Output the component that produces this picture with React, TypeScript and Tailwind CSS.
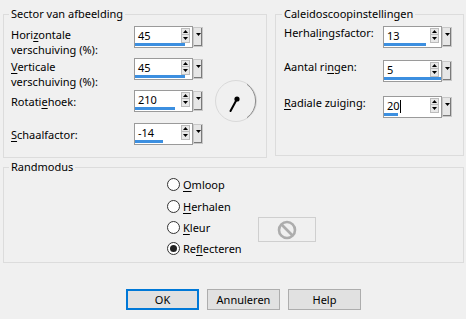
import React from "react";

function Mn({ children }: { children: React.ReactNode }) {
  return <span className="underline underline-offset-[2px]">{children}</span>;
}

function SpinArrows() {
  return (
    <div className="flex h-[15px] w-[9px] flex-col border border-[#bcbcbc] bg-[#e8e8e8]">
      <div className="flex h-[6px] items-center justify-center border-b border-[#bcbcbc]">
        <svg width="5" height="3" viewBox="0 0 5 3">
          <path d="M0 3 L2.5 0 L5 3 Z" fill="#000" />
        </svg>
      </div>
      <div className="flex h-[6px] items-center justify-center">
        <svg width="5" height="3" viewBox="0 0 5 3">
          <path d="M0 0 L5 0 L2.5 3 Z" fill="#000" />
        </svg>
      </div>
    </div>
  );
}

function SpinBox({ value, bar, caret }: { value: string; bar: number; caret?: boolean }) {
  return (
    <div className="flex items-start">
      <div className="flex h-[22px] w-[59px] flex-col border border-[#9a9a9a] bg-white">
        <div className="flex h-[16px] items-start">
          <div className="flex h-[16px] flex-1 items-center pl-[3px] pt-[2px] leading-[14px]">
            <span>{value}</span>
            {caret && <span className="inline-block h-[13px] w-px bg-black" />}
          </div>
          <div className="mr-[2px] mt-[1px]">
            <SpinArrows />
          </div>
        </div>
        <div className="h-[3px] bg-[#3c8fe0]" style={{ width: bar }} />
      </div>
      <div className="mt-[1px] flex h-[20px] w-[10px] items-start justify-center border border-[#c8c8c8] bg-[#e6e6e6] pt-[5px] shadow-[inset_-1px_-1px_0_#7a7a7a]">
        <svg width="5" height="3" viewBox="0 0 5 3">
          <path d="M0 0 L5 0 L2.5 3 Z" fill="#000" />
        </svg>
      </div>
    </div>
  );
}

function Radio({ label, checked }: { label: React.ReactNode; checked?: boolean }) {
  return (
    <div className="flex items-center gap-[3px]">
      <div className="flex h-[13px] w-[13px] items-center justify-center rounded-full border border-[#333333] bg-white">
        {checked && <div className="h-[7px] w-[7px] rounded-full bg-[#222222]" />}
      </div>
      <span>{label}</span>
    </div>
  );
}

function Dial() {
  return (
    <svg width="44" height="44" viewBox="0 0 44 44">
      <circle cx="22" cy="22" r="20.5" fill="none" stroke="#d9d9d9" strokeWidth="1" />
      <path d="M 33 5.3 A 20.5 20.5 0 0 1 33 38.7" fill="none" stroke="#8a8a8a" strokeWidth="1" />
      <line x1="23" y1="20" x2="16.5" y2="32" stroke="#000" strokeWidth="2" strokeLinecap="round" />
      <circle cx="23" cy="20" r="2.6" fill="#000" />
    </svg>
  );
}

function Button({ children, primary }: { children: React.ReactNode; primary?: boolean }) {
  return (
    <div
      className={
        primary
          ? "flex h-[21px] w-[73px] items-center justify-center border border-[#0078d7] bg-[#e1e1e1] shadow-[inset_0_0_0_1px_#0078d7]"
          : "flex h-[21px] w-[73px] items-center justify-center border border-[#adadad] bg-[#e1e1e1]"
      }
    >
      {children}
    </div>
  );
}

export default function App() {
  return (
    <div className="h-[319px] w-[466px] overflow-hidden bg-[#f0f0f0] font-['Noto_Sans',sans-serif] text-[11px] leading-[15px] text-black">
      <div className="flex items-start pl-[3px] pt-[6px]">
        <fieldset className="h-[152px] w-[264px] border border-[#dcdcdc] pl-[7px]">
          <legend className="ml-[-2px] px-[2px] leading-[16px]">Sector van afbeelding</legend>
          <div className="flex items-start">
            <div className="flex flex-col pt-[4px]">
              <div className="flex h-[32px] items-start">
                <div className="w-[123px] pt-[1px]">
                  Hori<Mn>z</Mn>ontale
                  <br />
                  verschuiving (%):
                </div>
                <SpinBox value="45" bar={50} />
              </div>
              <div className="flex h-[32px] items-start">
                <div className="w-[123px] pt-[1px]">
                  <Mn>V</Mn>erticale
                  <br />
                  verschuiving (%):
                </div>
                <SpinBox value="45" bar={50} />
              </div>
              <div className="flex h-[33px] items-start">
                <div className="flex h-[22px] w-[123px] items-center">
                  <span>
                    Rotati<Mn>e</Mn>hoek:
                  </span>
                </div>
                <SpinBox value="210" bar={40} />
              </div>
              <div className="flex h-[22px] items-start">
                <div className="flex h-[22px] w-[123px] items-center">
                  <span>
                    <Mn>S</Mn>chaalfactor:
                  </span>
                </div>
                <SpinBox value="-14" bar={28} />
              </div>
            </div>
            <div className="ml-[11px] mt-[57px]">
              <Dial />
            </div>
          </div>
        </fieldset>
        <fieldset className="ml-[8px] h-[150px] w-[189px] border border-[#dcdcdc] pl-[8px]">
          <legend className="ml-[-2px] px-[2px] leading-[16px]">Caleidoscoopinstellingen</legend>
          <div className="flex flex-col pt-[4px]">
            <div className="flex h-[34px] items-start">
              <div className="mt-[-1px] w-[99px] leading-[16px]">
                Herhal<Mn>i</Mn>ngsfactor:
              </div>
              <SpinBox value="13" bar={42} />
            </div>
            <div className="flex h-[36px] items-start">
              <div className="mt-[-1px] w-[99px] leading-[16px]">
                Aantal ri<Mn>n</Mn>gen:
              </div>
              <SpinBox value="5" bar={57} />
            </div>
            <div className="flex h-[22px] items-start">
              <div className="mt-[-1px] w-[99px] leading-[16px]">
                <Mn>R</Mn>adiale zuiging:
              </div>
              <SpinBox value="20" bar={14} caret />
            </div>
          </div>
        </fieldset>
      </div>
      <fieldset className="ml-[3px] mt-[1px] h-[104px] w-[461px] border border-[#dcdcdc] pl-[7px]">
        <legend className="ml-[-2px] px-[2px] leading-[16px]">Randmodus</legend>
        <div className="ml-[156px] mt-[-2px] flex items-start">
          <div className="flex w-[91px] flex-col">
            <div className="flex h-[22px] items-center">
              <Radio label={<><Mn>O</Mn>mloop</>} />
            </div>
            <div className="flex h-[22px] items-center">
              <Radio label={<><Mn>H</Mn>erhalen</>} />
            </div>
            <div className="flex h-[21px] items-center">
              <Radio label={<><Mn>K</Mn>leur</>} />
            </div>
            <div className="flex h-[21px] items-center">
              <Radio label={<>Re<Mn>f</Mn>lecteren</>} checked />
            </div>
          </div>
          <div className="mt-[44px] flex h-[25px] w-[58px] items-center justify-center border border-[#cfcfcf] bg-[#f0f0f0]">
            <svg width="22" height="22" viewBox="0 0 22 22">
              <circle cx="11" cy="11" r="8" fill="none" stroke="#adadad" strokeWidth="2.6" />
              <line x1="5.5" y1="5.5" x2="16.5" y2="16.5" stroke="#adadad" strokeWidth="2.6" />
            </svg>
          </div>
        </div>
      </fieldset>
      <div className="mt-[26px] flex gap-[8px] pl-[126px]">
        <Button primary>OK</Button>
        <Button>Annuleren</Button>
        <Button>Help</Button>
      </div>
    </div>
  );
}
